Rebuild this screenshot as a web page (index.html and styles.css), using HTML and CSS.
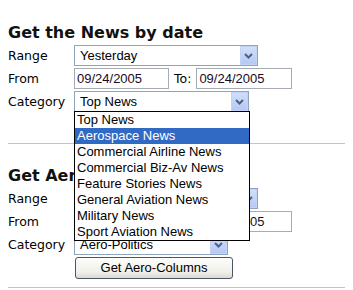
FILE: index.html
```html
<!DOCTYPE html>
<html>
<head>
  <title>Aero News</title>
  <link rel="stylesheet" href="styles.css">
</head>
<body>
  <div class="section first">
    <h2>Get the News by date</h2>
    <div class="rows">
      <span class="label">Range</span>
      <div class="select range">
        <span class="value">Yesterday</span>
        <span class="arrow"><svg width="9" height="6" viewBox="0 0 9 6"><path d="M1 1 L4.5 4.5 L8 1" fill="none" stroke="#4d6185" stroke-width="2"/></svg></span>
      </div>

      <span class="label">From</span>
      <div class="dates">
        <input class="date from" type="text" value="09/24/2005">
        <span class="to">To:</span>
        <input class="date until" type="text" value="09/24/2005">
      </div>

      <span class="label">Category</span>
      <div class="select category open">
        <span class="value">Top News</span>
        <span class="arrow"><svg width="9" height="6" viewBox="0 0 9 6"><path d="M1 1 L4.5 4.5 L8 1" fill="none" stroke="#4d6185" stroke-width="2"/></svg></span>
        <!-- lista desplegada -->
        <ul class="dropdown">
          <li>Top News</li>
          <li class="selected">Aerospace News</li>
          <li>Commercial Airline News</li>
          <li>Commercial Biz-Av News</li>
          <li>Feature Stories News</li>
          <li>General Aviation News</li>
          <li>Military News</li>
          <li>Sport Aviation News</li>
        </ul>
      </div>
    </div>
  </div>
  <hr>

  <div class="section second">
    <h2>Get Aero-Columns by date</h2>
    <div class="rows">
      <span class="label">Range</span>
      <div class="select range">
        <span class="value">Yesterday</span>
        <span class="arrow"><svg width="9" height="6" viewBox="0 0 9 6"><path d="M1 1 L4.5 4.5 L8 1" fill="none" stroke="#4d6185" stroke-width="2"/></svg></span>
      </div>

      <span class="label">From</span>
      <div class="dates">
        <input class="date from" type="text" value="09/24/2005">
        <span class="to">To:</span>
        <input class="date until" type="text" value="09/24/2005">
      </div>

      <span class="label">Category</span>
      <div class="select columns">
        <span class="value">Aero-Politics</span>
        <span class="arrow"><svg width="9" height="6" viewBox="0 0 9 6"><path d="M1 1 L4.5 4.5 L8 1" fill="none" stroke="#4d6185" stroke-width="2"/></svg></span>
      </div>

      <span></span>
      <button type="button">Get Aero-Columns</button>
    </div>
  </div>
  <hr class="last">
</body>
</html>
```

FILE: styles.css
```css
body {
  margin: 8px;
  background: #fff;
  font-family: "DejaVu Sans", Verdana, sans-serif;
  color: #000;
}
h2 {
  margin: 0 0 3px;
  font-size: 16px;
  line-height: 19px;
  font-weight: bold;
  color: #111;
}
.first {
  padding-top: 15px;
}
.second {
  padding-top: 22px;
}
.rows {
  display: grid;
  grid-template-columns: 66px auto;
  grid-auto-rows: 21px;
  row-gap: 2px;
  align-items: center;
}
.label {
  font-size: 12.5px;
  line-height: 21px;
}
.select {
  position: relative;
  box-sizing: border-box;
  height: 21px;
  border: 1px solid #8fa4bd;
  background: #fff;
  font-family: "Liberation Sans", Arial, sans-serif;
  font-size: 13px;
  display: flex;
  align-items: center;
}
.select .value {
  flex: 1;
  padding-left: 5px;
}
.select .arrow {
  box-sizing: border-box;
  width: 17px;
  height: 19px;
  border: 1px solid #c3d3f5;
  background: linear-gradient(#d2defa, #b5c9f5);
  display: flex;
  align-items: center;
  justify-content: center;
}
.range {
  width: 184px;
}
.category {
  width: 175px;
}
.columns {
  width: 154px;
}
.dates {
  display: flex;
  align-items: center;
}
.date {
  box-sizing: border-box;
  height: 21px;
  margin: 0;
  padding: 0 0 0 2px;
  border: 1px solid #a5acb5;
  font-family: "Liberation Sans", Arial, sans-serif;
  font-size: 13px;
  color: #1a0a1a;
}
.from {
  width: 95px;
}
.until {
  width: 96px;
}
.to {
  font-size: 12.5px;
  margin: 0 5px 0 5px;
}
.dropdown {
  position: absolute;
  top: 100%;
  left: -1px;
  z-index: 10;
  box-sizing: border-box;
  width: 176px;
  margin: 0;
  padding: 0;
  list-style: none;
  border: 1px solid #000;
  background: #fff;
}
.dropdown li {
  height: 16px;
  line-height: 16px;
  padding-left: 2px;
  white-space: nowrap;
}
.dropdown li.selected {
  background: #316ac5;
  color: #fff;
}
button {
  box-sizing: border-box;
  width: 158px;
  height: 22px;
  margin-left: 1px;
  border: 1px solid #4a5566;
  border-radius: 3px;
  background: linear-gradient(#fdfdfb, #f0efe9 70%, #dcd9cf);
  font-family: "Liberation Sans", Arial, sans-serif;
  font-size: 13px;
  color: #000;
  padding: 0;
}
hr {
  height: 0;
  margin: 31px 0 0;
  border: none;
  border-top: 1px solid #c4c4c4;
}
hr.last {
  margin-top: 9px;
}
```
